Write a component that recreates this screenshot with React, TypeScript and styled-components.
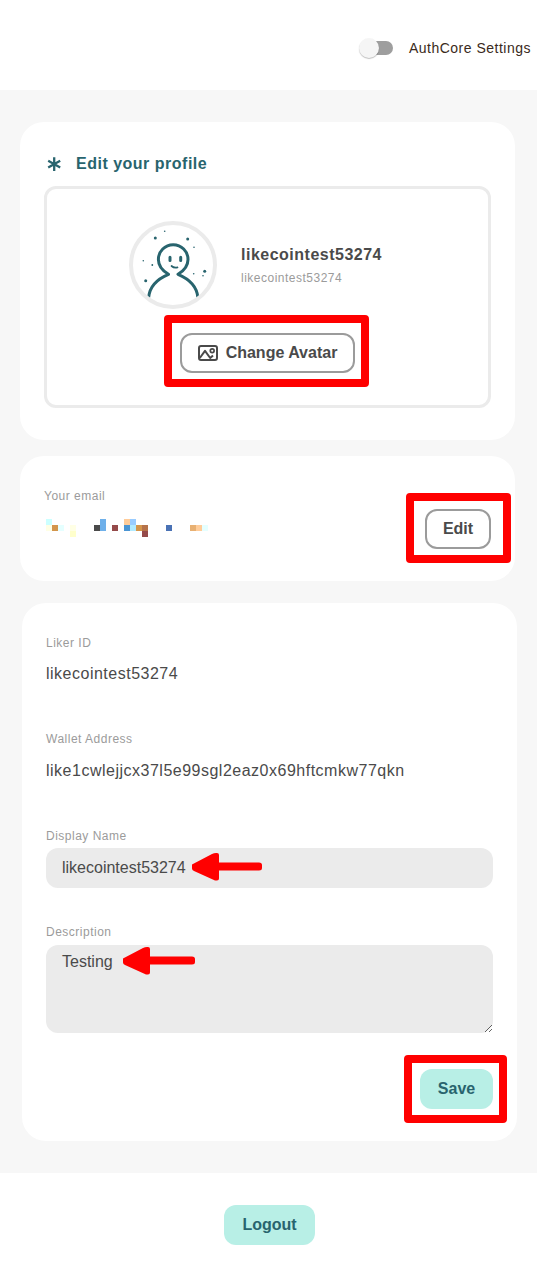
import React from 'react';
import styled, { createGlobalStyle, css } from 'styled-components';

const GlobalStyle = createGlobalStyle`
  * { box-sizing: border-box; }
  body {
    margin: 0;
    background: #fff;
    color: #4a4a4a;
    font-family: "Liberation Sans", Arial, sans-serif;
    font-size: 16px;
    letter-spacing: 0.5px;
  }
`;

const Page = styled.div`
  display: flex;
  flex-direction: column;
  width: 537px;
  height: 1276px;
  overflow: hidden;
`;

const TopBar = styled.header`
  display: flex;
  align-items: center;
  justify-content: flex-end;
  gap: 16px;
  height: 90px;
  padding: 6px 6px 0 0;
  color: #3a2a20;
  font-size: 14px;
  line-height: 20px;
`;

const Track = styled.span`
  display: flex;
  align-items: center;
  width: 32px;
  height: 14px;
  border-radius: 7px;
  background: #9e9e9e;
`;

const Knob = styled.span`
  flex: none;
  width: 20px;
  height: 20px;
  margin-left: -2px;
  border-radius: 50%;
  background: #f5f5f5;
  box-shadow: 0 1px 1px rgba(0, 0, 0, 0.25);
`;

const Content = styled.main`
  display: flex;
  flex-direction: column;
  height: 1083px;
  padding: 32px 20px;
  background: #f7f7f7;
`;

const Card = styled.section`
  width: 495px;
  border-radius: 24px;
  background: #fff;
`;

const ProfileCard = styled(Card)`
  display: flex;
  flex-direction: column;
  gap: 10px;
  padding: 30px 24px 32px;
`;

const EmailCard = styled(Card)`
  display: flex;
  justify-content: space-between;
  align-items: flex-end;
  height: 125px;
  margin-top: 16px;
  padding: 32px 24px;
`;

const EmailColumn = styled.div`
  display: flex;
  flex-direction: column;
  align-self: flex-start;
  gap: 15px;
`;

const DetailsCard = styled(Card)`
  display: flex;
  flex-direction: column;
  height: 538px;
  margin: 22px 0 0 2px;
  padding: 32px 24px;
`;

const CardTitle = styled.h1`
  display: flex;
  align-items: center;
  gap: 12px;
  height: 24px;
  margin: 0;
  color: #28646e;
  font-size: 16px;
  line-height: 24px;
`;

const AvatarPanel = styled.div`
  display: flex;
  flex-direction: column;
  align-items: center;
  gap: 24px;
  height: 222px;
  padding-top: 32px;
  border: 3px solid #ebebeb;
  border-radius: 12px;
`;

const Identity = styled.div`
  display: flex;
  align-items: center;
  gap: 24px;
  padding-right: 24px;
`;

const AvatarRing = styled.div`
  width: 88px;
  height: 88px;
  border: 4px solid #ebebeb;
  border-radius: 50%;
  overflow: hidden;
  svg { display: block; margin: -4px; }
`;

const UserName = styled.div`
  font-weight: 700;
  line-height: 24px;
`;

const UserHandle = styled.div`
  margin: 3px 0 1px;
  color: #9b9b9b;
  font-size: 12px;
  line-height: 16px;
`;

const Label = styled.div`
  color: #9b9b9b;
  font-size: 12px;
  line-height: 16px;
`;

const Field = styled.div<{ $gap: number; $height: number }>`
  position: relative;
  display: flex;
  flex-direction: column;
  flex: none;
  gap: ${(p) => p.$gap}px;
  height: ${(p) => p.$height}px;
`;

const Value = styled.div`
  line-height: 24px;
`;

const control = css`
  display: block;
  width: 100%;
  border: 0;
  border-radius: 12px;
  outline: 0;
  background: #ebebeb;
  color: #4a4a4a;
  font: 16px/24px "Liberation Sans", Arial, sans-serif;
  letter-spacing: 0;
`;

const TextInput = styled.input`
  ${control}
  height: 40px;
  padding: 0 16px;
`;

const TextArea = styled.textarea`
  ${control}
  height: 88px;
  padding: 5px 16px;
  resize: vertical;
`;

const Button = styled.button<{ $filled?: boolean; $width: number }>`
  display: flex;
  align-items: center;
  justify-content: center;
  gap: 8px;
  width: ${(p) => p.$width}px;
  height: 40px;
  padding: 0;
  border: ${(p) => (p.$filled ? '0' : '2px solid #9b9b9b')};
  border-radius: 12px;
  background: ${(p) => (p.$filled ? '#b8efe6' : '#fff')};
  color: ${(p) => (p.$filled ? '#28646e' : '#4a4a4a')};
  font: 700 16px/24px "Liberation Sans", Arial, sans-serif;
  letter-spacing: 0;
  white-space: nowrap;
`;

const Marked = styled.div`
  position: relative;
  align-self: flex-end;
`;

const MarkedCenter = styled(Marked)`
  align-self: center;
`;

const Highlight = styled.span<{ $inset: string }>`
  position: absolute;
  inset: ${(p) => p.$inset};
  border: 8px solid #f00;
  border-radius: 4px;
  pointer-events: none;
`;

const ArrowMark = styled.svg<{ $left: number; $top: number }>`
  position: absolute;
  left: ${(p) => p.$left}px;
  top: ${(p) => p.$top}px;
`;

const Footer = styled.footer`
  display: flex;
  justify-content: center;
  padding: 32px 0 0 2px;
`;

const teal = '#28646e';

const AsteriskIcon = () => (
  <svg width="20" height="20" viewBox="0 0 20 20" stroke={teal} strokeWidth="2.3">
    <path d="M10.200 3.300v13.800M4.200 6.800l12 6.800M4.200 13.600l12-6.800" />
  </svg>
);

const PictureIcon = () => (
  <svg width="20" height="16" viewBox="0 0 20 16" fill="none" stroke="#4a4a4a" strokeWidth="2">
    <rect x="1" y="1" width="18" height="14" rx="2" />
    <path d="M1.800 13L7 5.800L12.200 13L15 10.500" strokeWidth="2" strokeLinejoin="round" />
    <circle cx="14.200" cy="5.700" r="1.900" strokeWidth="1.700" />
  </svg>
);

const dots = [
  [26.3, 17, 1.5], [35.7, 10.3, 0.8], [58.7, 18, 1.5], [65, 26.2, 0.8], [14.3, 39.7, 0.8],
  [23.3, 44, 0.9], [16.7, 59.7, 1.5], [64.7, 52.7, 0.8], [75.7, 50.3, 1.5], [74, 54.7, 0.8],
];

const AvatarArt = () => (
  <svg width="88" height="88" viewBox="0 0 88 88" fill="none" stroke={teal} strokeWidth="3">
    <path
      d="M19.600 76.500C20.500 66.500 27 58.500 39.500 53.300C33 49.500 29.400 44.500 29.400 38.500A14.800 14.800 0 0 1 59 38.500C59 44.500 55.400 49.500 49 53.300C61.500 58.500 68 66.500 68.900 76.500"
      strokeLinejoin="round"
    />
    <path d="M41 36.300v3.200M51.700 36.300v3.200" strokeLinecap="round" />
    <path d="M42.500 45Q45 47.300 48.500 46.400" strokeWidth="1.7" strokeLinecap="round" />
    {dots.map(([x, y, r]) => (
      <circle key={`${x}-${y}`} cx={x} cy={y} r={r} fill={teal} stroke="none" />
    ))}
  </svg>
);

const cells: [number, number, string][] = [
  [0, 0, '#ccffff'], [9, 0, '#6eb0ea'], [13, 0, '#ffcc99'], [14, 0, '#99ccff'],
  [0, 1, '#ffffe5'], [1, 1, '#d3954c'], [2, 1, '#e5ffff'], [4, 1, '#ffffe5'],
  [8, 1, '#4a4a4a'], [9, 1, '#6eb0ea'], [11, 1, '#954a4a'], [13, 1, '#4a95d3'],
  [14, 1, '#b0eaff'], [15, 1, '#d3954c'], [16, 1, '#b5724a'], [20, 1, '#4a72b5'],
  [24, 1, '#e8b072'], [25, 1, '#ffcc99'], [26, 1, '#e5ffff'],
  [4, 2, '#ffffcc'], [16, 2, '#954a4a'],
];

const MaskedEmail = () => (
  <svg width="166" height="18" shapeRendering="crispEdges">
    {cells.map(([x, y, fill]) => (
      <rect key={`${x}-${y}`} x={x * 6 + 2} y={y * 6} width="6" height="6" fill={fill} />
    ))}
  </svg>
);

const Arrow = ({ left, top, length }: { left: number; top: number; length: number }) => (
  <ArrowMark $left={left} $top={top} width={length} height="28" viewBox={`0 0 ${length} 28`} fill="#f00">
    <path d={`M0 11.500L20 1Q22 0 24 0H25Q27 0 27 2V9.500H${length - 3}Q${length} 9.500 ${length} 12V15Q${length} 17.500 ${length - 3} 17.500H27V25.500Q27 27.500 25 27.500H23L2 18Q0 17 0 15.500Z`} />
  </ArrowMark>
);

export default function App() {
  return (
    <Page>
      <GlobalStyle />
      <TopBar>
        <Track><Knob /></Track>
        <span>AuthCore Settings</span>
      </TopBar>
      <Content>
        <ProfileCard>
          <CardTitle><AsteriskIcon />Edit your profile</CardTitle>
          <AvatarPanel>
            <Identity>
              <AvatarRing><AvatarArt /></AvatarRing>
              <div>
                <UserName>likecointest53274</UserName>
                <UserHandle>likecointest53274</UserHandle>
              </div>
            </Identity>
            <MarkedCenter>
              <Button $width={175}><PictureIcon />Change Avatar</Button>
              <Highlight $inset="-18px -14px -14px -16px" />
            </MarkedCenter>
          </AvatarPanel>
        </ProfileCard>
        <EmailCard>
          <EmailColumn>
            <Label>Your email</Label>
            <MaskedEmail />
          </EmailColumn>
          <Marked>
            <Button $width={66}>Edit</Button>
            <Highlight $inset="-16px -20px -14px -19px" />
          </Marked>
        </EmailCard>
        <DetailsCard>
          <Field $gap={11} $height={96}>
            <Label>Liker ID</Label>
            <Value>likecointest53274</Value>
          </Field>
          <Field $gap={12} $height={97}>
            <Label>Wallet Address</Label>
            <Value>like1cwlejjcx37l5e99sgl2eaz0x69hftcmkw77qkn</Value>
          </Field>
          <Field $gap={4} $height={96}>
            <Label>Display Name</Label>
            <TextInput defaultValue="likecointest53274" />
            <Arrow left={146} top={25} length={70} />
          </Field>
          <Field $gap={5} $height={145}>
            <Label>Description</Label>
            <TextArea defaultValue="Testing" />
            <Arrow left={77} top={23} length={72} />
          </Field>
          <Marked>
            <Button $filled $width={73}>Save</Button>
            <Highlight $inset="-14px -14px -14px -16px" />
          </Marked>
        </DetailsCard>
      </Content>
      <Footer>
        <Button $filled $width={91}>Logout</Button>
      </Footer>
    </Page>
  );
}
